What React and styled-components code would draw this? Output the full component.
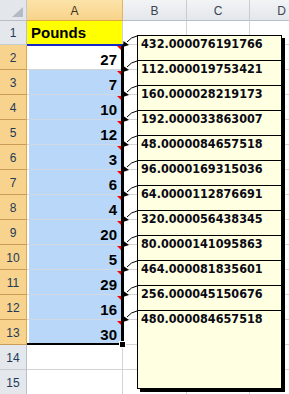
import React from 'react'
import styled, { createGlobalStyle } from 'styled-components'

const GlobalStyle = createGlobalStyle`
  html, body { margin:0; padding:0; background:#fff; overflow:hidden; }
  body { width:289px; height:394px; }
`;

const values = [27, 7, 10, 12, 3, 6, 4, 20, 5, 29, 16, 30];
const notes = [
  '432.000076191766', '112.000019753421', '160.000028219173', '192.000033863007',
  '48.0000084657518', '96.0000169315036', '64.0000112876691', '320.000056438345',
  '80.0000141095863', '464.000081835601', '256.000045150676', '480.000084657518',
];
const cols = ['A', 'B', 'C', 'D'];

const Page = styled.div`
  position:relative;
  width:289px;
  height:394px;
  overflow:hidden;
`;

const Sheet = styled.div`
  display:grid;
  grid-template-columns:27px 96px 64px 63px 64px;
  grid-template-rows:21px 24px repeat(14, 25px);
  font-family:"Liberation Sans", Arial, sans-serif;
`;

const Corner = styled.div`
  position:relative;
  box-sizing:border-box;
  background:#e3e6eb;
  border-right:1px solid #c3c8cf;
  border-bottom:1px solid #b9bfc7;
  &::after{
    content:'';
    position:absolute;
    right:3px;
    bottom:3px;
    width:0;
    height:0;
    border-left:11px solid transparent;
    border-bottom:10px solid #b5bbc4;
  }
`;

const ColHead = styled.div`
  box-sizing:border-box;
  display:flex;
  align-items:center;
  justify-content:center;
  font-size:12px;
  color:${p => p.$selected ? '#3b3322' : '#3c4552'};
  background:${p => p.$selected
    ? 'linear-gradient(#fbe3a8, #f8d38a)'
    : 'linear-gradient(#f2f4f6, #e4e7eb)'};
  border-right:1px solid ${p => p.$selected ? '#e2b45f' : '#c7ccd3'};
  border-bottom:1px solid ${p => p.$selected ? '#e2a93c' : '#b9bfc7'};
  padding-top:1px;
`;

const RowHead = styled.div`
  box-sizing:border-box;
  display:flex;
  align-items:flex-end;
  justify-content:center;
  padding-bottom:4px;
  font-size:12px;
  color:#233a57;
  background:${p => p.$selected ? '#f8d38d' : '#e4e7ec'};
  border-right:1px solid ${p => p.$selected ? '#e0a847' : '#b9bfc7'};
  border-bottom:1px solid ${p => p.$selected ? '#c99c57' : '#c7ccd3'};
`;

const fills = {
  plain: '#fff',
  title: '#ffff00',
  active: '#fff',
  selected: '#b9d7f9',
};

const Cell = styled.div`
  position:relative;
  box-sizing:border-box;
  display:flex;
  align-items:flex-end;
  justify-content:${p => p.$kind === 'title' ? 'flex-start' : 'flex-end'};
  padding:${p => p.$kind === 'title' ? '0 0 3px 4px' : '0 5px 1px 0'};
  background:${p => fills[p.$kind || 'plain']};
  box-shadow:${p => p.$kind === 'selected' ? 'inset 2px 0 0 #fff' : 'none'};
  border-right:1px solid #d4d4d4;
  border-bottom:1px solid ${p => p.$kind === 'selected' ? '#d3d9e1' : '#d4d4d4'};
  font-size:15px;
  font-weight:bold;
  color:#000;
  line-height:17px;
  ${p => p.$note && `
    &::after{
      content:'';
      position:absolute;
      top:1px;
      right:1px;
      width:0;
      height:0;
      border-left:4px solid transparent;
      border-top:4px solid #ff0000;
    }
  `}
`;

const Frame = styled.div`
  position:absolute;
  left:27px;
  top:44px;
  width:97px;
  height:301px;
  box-sizing:border-box;
  border-top:2px solid #1526c9;
  border-right:3px solid #000;
  border-bottom:2px solid #000;
  pointer-events:none;
`;

const Handle = styled.div`
  position:absolute;
  right:-4px;
  bottom:-4px;
  width:5px;
  height:5px;
  background:#000;
  box-shadow:0 0 0 1px #fff;
`;

const CommentBox = styled.div`
  position:absolute;
  left:137px;
  top:35px;
  width:145px;
  height:354px;
  box-sizing:border-box;
  display:flex;
  flex-direction:column;
  background:#ffffe1;
  border:1px solid #000;
  box-shadow:3px 3px 0 #000;
`;

const Note = styled.div`
  box-sizing:border-box;
  flex:${p => p.$last ? '1' : '0 0 25px'};
  border-bottom:${p => p.$last ? 'none' : '1px solid #000'};
  padding:1px 0 0 3px;
  font-family:"DejaVu Sans Condensed", "DejaVu Sans", sans-serif;
  font-stretch:condensed;
  font-weight:bold;
  font-size:12.5px;
  line-height:14px;
  color:#0a0a14;
  white-space:nowrap;
`;

const Arrows = styled.svg`
  position:absolute;
  left:0;
  top:0;
  pointer-events:none;
`;

const App = () => {
  const rows = [];
  for (let r = 1; r <= 15; r++) {
    const inRange = r >= 2 && r <= 13;
    let kind = 'plain';
    if (r === 1) kind = 'title';
    else if (r === 2) kind = 'active';
    else if (inRange) kind = 'selected';
    rows.push(
      <React.Fragment key={r}>
        <RowHead $selected={inRange}>{r}</RowHead>
        <Cell $kind={kind} $note={inRange}>
          {r === 1 ? 'Pounds' : inRange ? values[r - 2] : ''}
        </Cell>
        <Cell />
        <Cell />
        <Cell />
      </React.Fragment>
    );
  }

  return (
    <Page>
      <GlobalStyle />
      <Sheet>
        <Corner />
        {cols.map(c => <ColHead key={c} $selected={c === 'A'}>{c}</ColHead>)}
        {rows}
      </Sheet>
      <Frame><Handle /></Frame>
      <Arrows width="289" height="394" viewBox="0 0 289 394">
        {values.map((v, i) => {
          const t = 45 + 25 * i;
          return (
            <g key={i}>
              <path d={`M137 ${t - 9} Q131 ${t - 8} 127 ${t - 3}`} fill="none" stroke="#000" strokeWidth="1" />
              <polygon points={`123,${t + 2} 123.5,${t - 4} 129,${t}`} fill="#000" />
            </g>
          );
        })}
      </Arrows>
      <CommentBox>
        {notes.map((n, i) => (
          <Note key={i} $last={i === notes.length - 1}>{n}</Note>
        ))}
      </CommentBox>
    </Page>
  )
}

export default App
